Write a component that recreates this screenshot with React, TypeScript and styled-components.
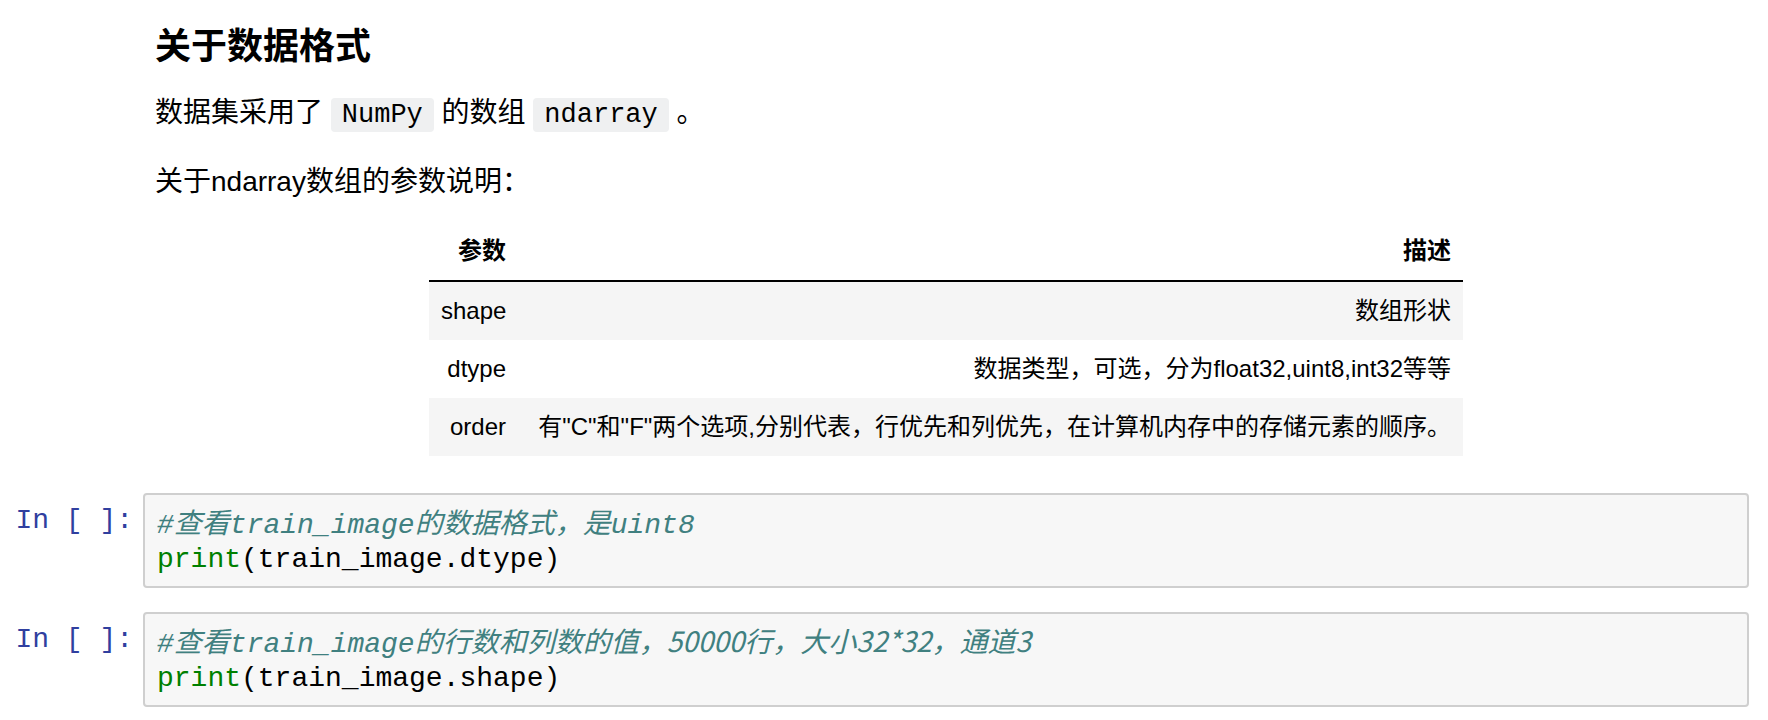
import styled, { createGlobalStyle } from "styled-components";

const GlobalStyle = createGlobalStyle`
  html, body {
    margin: 0;
    padding: 0;
    background: #ffffff;
  }
  body {
    font-family: "Liberation Sans", "Noto Sans CJK SC", sans-serif;
    color: #000000;
  }
`;

const Notebook = styled.div`
  width: 1768px;
  padding: 25px 19px 0 0;
  box-sizing: border-box;
`;

const CellRow = styled.div<{ $gap?: number }>`
  display: flex;
  align-items: flex-start;
  margin-bottom: ${(p) => p.$gap ?? 0}px;
`;

const Prompt = styled.div`
  flex: 0 0 143px;
  box-sizing: border-box;
  padding: 11px 10px 0 0;
  text-align: right;
  font-family: "Liberation Mono", monospace;
  font-size: 28px;
  line-height: 34px;
  color: #303f9f;
  white-space: pre;
`;

const Markdown = styled.div`
  flex: 1;
  padding: 0 12px;
  min-width: 0;
`;

const Title = styled.h3`
  margin: 0 0 24px;
  font-size: 36px;
  line-height: 44px;
  font-weight: 700;
`;

const Para = styled.p<{ $after?: number }>`
  margin: 0 0 ${(p) => p.$after ?? 27}px;
  font-size: 28px;
  line-height: 40px;
`;

const InlineCode = styled.code`
  font-family: "Liberation Mono", monospace;
  font-size: 27px;
  background: #eff0f1;
  border-radius: 4px;
  padding: 2px 11px;
`;

const Table = styled.table`
  width: 1034px;
  margin: 0 auto;
  border-collapse: collapse;
  table-layout: fixed;
  font-size: 24px;
  line-height: 34px;
`;

const Th = styled.th`
  padding: 12px;
  text-align: right;
  font-weight: 700;
  border-bottom: 2px solid #000000;
`;

const Row = styled.tr`
  &:nth-child(odd) {
    background: #f5f5f5;
  }
`;

const Td = styled.td`
  padding: 12px;
  text-align: right;
  white-space: nowrap;
`;

const InputArea = styled.div`
  flex: 1;
  background: #f7f7f7;
  border: 2px solid #cfcfcf;
  border-radius: 4px;
  padding: 9px 12px;
  font-family: "Liberation Mono", "Noto Sans CJK SC", monospace;
  font-size: 28px;
  line-height: 34px;
  white-space: pre;
`;

const CodeLine = styled.div``;

const Comment = styled.span`
  color: #408080;
  font-style: italic;
`;

const Cjk = styled.span`
  font-family: "Noto Sans CJK SC", sans-serif;
`;

const Builtin = styled.span`
  color: #008000;
`;

const params = [
  { name: "shape", desc: "数组形状" },
  { name: "dtype", desc: "数据类型，可选，分为float32,uint8,int32等等" },
  {
    name: "order",
    desc: '有"C"和"F"两个选项,分别代表，行优先和列优先，在计算机内存中的存储元素的顺序。',
  },
];

export default function App() {
  return (
    <>
      <GlobalStyle />
      <Notebook>
        <CellRow $gap={37}>
          <Prompt />
          <Markdown>
            <Title>关于数据格式</Title>
            <Para>
              数据集采用了 <InlineCode>NumPy</InlineCode> 的数组{" "}
              <InlineCode>ndarray</InlineCode> 。
            </Para>
            <Para $after={20}>关于ndarray数组的参数说明：</Para>
            <Table>
              <colgroup>
                <col style={{ width: 89 }} />
                <col />
              </colgroup>
              <thead>
                <tr>
                  <Th>参数</Th>
                  <Th>描述</Th>
                </tr>
              </thead>
              <tbody>
                {params.map((p) => (
                  <Row key={p.name}>
                    <Td>{p.name}</Td>
                    <Td>{p.desc}</Td>
                  </Row>
                ))}
              </tbody>
            </Table>
          </Markdown>
        </CellRow>

        <CellRow $gap={24}>
          <Prompt>In [ ]:</Prompt>
          <InputArea>
            <CodeLine>
              <Comment>
                #<Cjk>查看</Cjk>train_image<Cjk>的数据格式，是</Cjk>uint8
              </Comment>
            </CodeLine>
            <CodeLine>
              <Builtin>print</Builtin>(train_image.dtype)
            </CodeLine>
          </InputArea>
        </CellRow>

        <CellRow>
          <Prompt>In [ ]:</Prompt>
          <InputArea>
            <CodeLine>
              <Comment>
                #<Cjk>查看</Cjk>train_image
                <Cjk>的行数和列数的值，50000行，大小32*32，通道3</Cjk>
              </Comment>
            </CodeLine>
            <CodeLine>
              <Builtin>print</Builtin>(train_image.shape)
            </CodeLine>
          </InputArea>
        </CellRow>
      </Notebook>
    </>
  );
}
